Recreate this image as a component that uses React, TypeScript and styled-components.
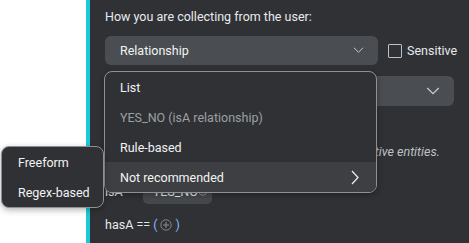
import styled, { createGlobalStyle } from "styled-components";

const GlobalStyle = createGlobalStyle`
  html, body {
    margin: 0;
    background: #ffffff;
  }
  body {
    font-family: Roboto, "Liberation Sans", sans-serif;
    font-size: 12px;
    color: #e8eaed;
  }
`;

const Page = styled.div`
  position: relative;
  display: flex;
  height: 243px;
  width: 469px;
  overflow: hidden;
`;

const Gutter = styled.div`
  width: 86px;
  flex: none;
  background: #ffffff;
`;

const Panel = styled.div`
  flex: 1;
  border-left: 4px solid #1ec8d8;
  background: #303134;
  padding: 9px 15px 0 15px;
  display: flex;
  flex-direction: column;
  white-space: nowrap;
`;

const Label = styled.div`
  font-size: 12.5px;
  line-height: 16px;
  color: #e8eaed;
`;

const Row = styled.div<{ $top?: number }>`
  display: flex;
  align-items: center;
  margin-top: ${(p) => p.$top ?? 0}px;
  font-size: 12.5px;
`;

const Select = styled.div<{ $width: number; $height: number }>`
  width: ${(p) => p.$width}px;
  height: ${(p) => p.$height}px;
  background: #4a4d51;
  border-radius: 6px;
  display: flex;
  align-items: center;
  justify-content: space-between;
  padding: 0 14px 0 15px;
  box-sizing: border-box;
  font-size: 12.5px;
  color: #f1f3f4;
`;

const Checkbox = styled.span`
  width: 12px;
  height: 12px;
  border: 1px solid #bdc1c6;
  border-radius: 1px;
  margin-left: 10px;
  margin-right: 5px;
`;

const Hint = styled.div`
  margin-top: 38px;
  font-style: italic;
  font-size: 12.5px;
  line-height: 16px;
  color: #bdc1c6;
`;

const Chip = styled.div`
  margin-left: 20px;
  width: 69px;
  height: 26px;
  border-radius: 5px;
  background: #45484c;
  display: flex;
  align-items: center;
  justify-content: space-between;
  padding: 0 4px 0 10px;
  box-sizing: border-box;
  color: #e8eaed;
`;

const Expr = styled.div`
  margin-top: 13px;
  display: flex;
  align-items: center;
  gap: 3px;
  font-size: 12.5px;
  line-height: 16px;
  color: #e8eaed;
`;

const Paren = styled.span`
  color: #8ab4f8;
`;

const Menu = styled.div<{ $left: number; $top: number; $width: number }>`
  position: absolute;
  left: ${(p) => p.$left}px;
  top: ${(p) => p.$top}px;
  width: ${(p) => p.$width}px;
  box-sizing: border-box;
  background: #303134;
  border: 1px solid #8f9092;
  border-radius: 8px;
  overflow: hidden;
  box-shadow: 0 2px 6px rgba(0, 0, 0, 0.3);
  white-space: nowrap;
`;

const Item = styled.div<{ $muted?: boolean; $active?: boolean; $pad?: number }>`
  height: 30px;
  display: flex;
  align-items: center;
  justify-content: space-between;
  padding: 0 17px 0 ${(p) => p.$pad ?? 15}px;
  font-size: 12.5px;
  color: ${(p) => (p.$muted ? "#9aa0a6" : "#f1f3f4")};
  background: ${(p) => (p.$active ? "#3e3f43" : "transparent")};
`;

const ChevronDown = ({ size = 12 }: { size?: number }) => (
  <svg width={size} height={size * 0.55} viewBox="0 0 14 8" fill="none">
    <polyline points="1,1 7,7 13,1" stroke="#c8cacd" strokeWidth="1.3" />
  </svg>
);

const ChevronRight = () => (
  <svg width="8" height="15" viewBox="0 0 8 15" fill="none">
    <polyline points="1,1 7,7.5 1,14" stroke="#e8eaed" strokeWidth="1.3" />
  </svg>
);

const PlusCircle = ({ color }: { color: string }) => (
  <svg width="12" height="12" viewBox="0 0 12 12" fill="none">
    <circle cx="6" cy="6" r="5.2" stroke={color} strokeWidth="1" />
    <line x1="6" y1="3" x2="6" y2="9" stroke={color} strokeWidth="1.2" />
    <line x1="3" y1="6" x2="9" y2="6" stroke={color} strokeWidth="1.2" />
  </svg>
);

export default function App() {
  return (
    <>
      <GlobalStyle />
      <Page>
        <Gutter />
        <Panel>
          <Label>How you are collecting from the user:</Label>
          <Row $top={11}>
            <Select $width={273} $height={29}>
              Relationship
              <ChevronDown size={11} />
            </Select>
            <Checkbox />
            Sensitive
          </Row>
          <Row $top={11}>
            <Select $width={349} $height={30}>
              YES_NO
              <ChevronDown size={14} />
            </Select>
          </Row>
          <Hint>Sensitive values will be hidden in exports for sensitive entities.</Hint>
          <Row $top={18}>
            isA
            <Chip>
              YES_NO
              <PlusCircle color="#9aa0a6" />
            </Chip>
          </Row>
          <Expr>
            hasA ==
            <Paren>(</Paren>
            <PlusCircle color="#7f8388" />
            <Paren>)</Paren>
          </Expr>
        </Panel>
        <Menu $left={104} $top={71} $width={273}>
          <Item>List</Item>
          <Item $muted>YES_NO (isA relationship)</Item>
          <Item>Rule-based</Item>
          <Item $active>
            Not recommended
            <ChevronRight />
          </Item>
        </Menu>
        <Menu $left={1} $top={146} $width={103}>
          <Item $pad={16}>Freeform</Item>
          <Item $pad={16}>Regex-based</Item>
        </Menu>
      </Page>
    </>
  );
}
